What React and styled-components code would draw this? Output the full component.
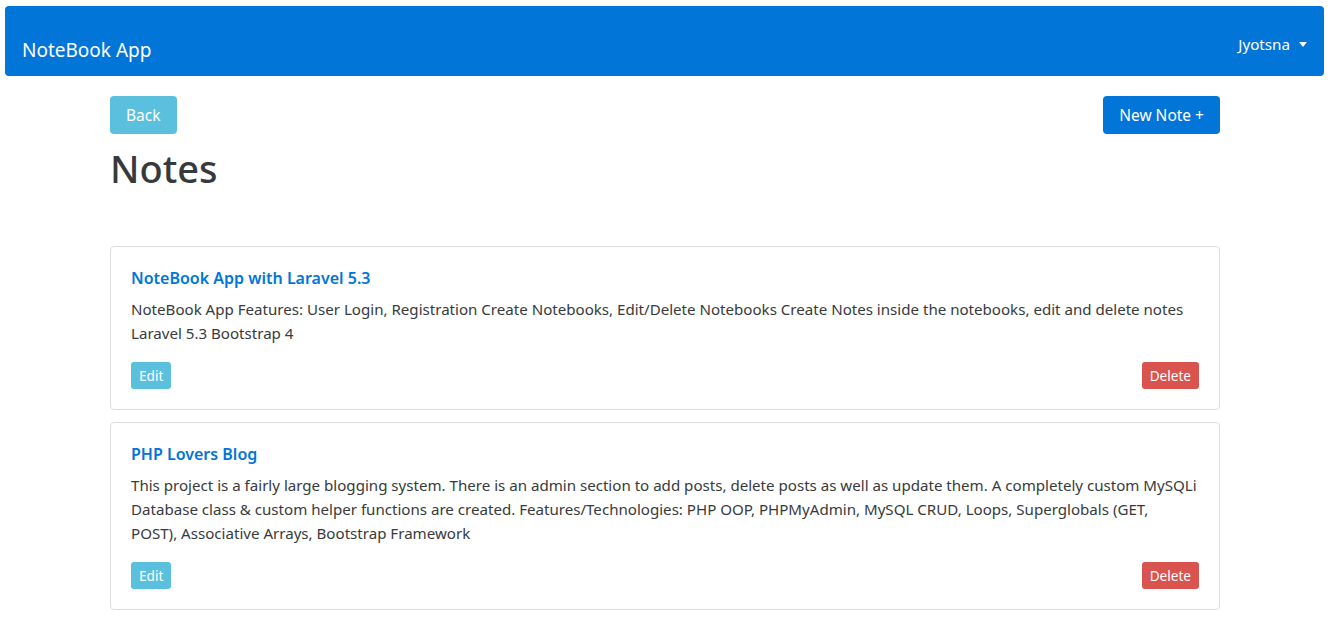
import React from 'react';
import styled, { createGlobalStyle } from 'styled-components';

const Color = {
  PRIMARY: '#0275d8',
  INFO: '#5bc0de',
  DANGER: '#d9534f',
  TEXT: '#373a3c',
  BORDER: '#dfdfdf'
};

const GlobalStyle = createGlobalStyle`
  body {
    margin: 0;
    background: #fff;
    color: ${Color.TEXT};
    font-family: "Noto Sans", "Open Sans", sans-serif;
    font-size: 15.1px;
    line-height: 24px;
  }

  * {
    box-sizing: border-box;
  }
`;

const StyledNavbar = styled.nav`
  display: flex;
  align-items: flex-start;
  justify-content: space-between;
  height: 70px;
  margin: 6px 7px 0 5px;
  padding: 0 17px;

  background-color: ${Color.PRIMARY};
  border-radius: 4px;
`;

const StyledBrand = styled.a`
  margin-top: 29px;

  color: #fff;
  font-size: 19px;
  line-height: 30px;
  text-decoration: none;
`;

const StyledUser = styled.a`
  display: flex;
  align-items: center;
  margin-top: 26px;

  color: #fff;
  font-size: 15.2px;
  line-height: 24px;
  text-decoration: none;

  &::after {
    content: '';
    margin-left: 9px;
    border-top: 5px solid #fff;
    border-left: 4.5px solid transparent;
    border-right: 4.5px solid transparent;
  }
`;

const StyledContainer = styled.main`
  width: 1111px;
  margin: 20px auto 0;
  padding-right: 1px;
`;

const StyledTopRow = styled.div`
  display: flex;
  justify-content: space-between;
`;

const StyledButton = styled.a`
  display: inline-block;
  padding: ${({ small }) => (small ? '3px 8px' : '7px 16px')};

  color: #fff;
  font-size: ${({ small }) => (small ? '13.6px' : '15.5px')};
  line-height: ${({ small }) => (small ? '21px' : '24px')};
  text-decoration: none;

  background-color: ${({ color }) => color};
  border-radius: ${({ small }) => (small ? '3px' : '4px')};
`;

const StyledHeading = styled.h1`
  margin: 12px 0 56px;

  font-size: 38px;
  font-weight: 500;
  line-height: 44px;
`;

const StyledCard = styled.article`
  margin-bottom: 12px;
  padding: 20px;

  border: 1px solid ${Color.BORDER};
  border-radius: 4px;
`;

const StyledCardTitle = styled.a`
  display: block;
  margin-bottom: 8px;

  color: ${Color.PRIMARY};
  font-size: 16px;
  font-weight: 600;
  line-height: 22px;
  text-decoration: none;
`;

const StyledCardText = styled.p`
  margin: 0 0 17px;
  white-space: nowrap;
`;

const StyledCardActions = styled.div`
  display: flex;
  align-items: center;
  justify-content: space-between;
`;

const notes = [
  {
    title: 'NoteBook App with Laravel 5.3',
    lines: [
      'NoteBook App Features: User Login, Registration Create Notebooks, Edit/Delete Notebooks Create Notes inside the notebooks, edit and delete notes',
      'Laravel 5.3 Bootstrap 4'
    ]
  },
  {
    title: 'PHP Lovers Blog',
    lines: [
      'This project is a fairly large blogging system. There is an admin section to add posts, delete posts as well as update them. A completely custom MySQLi',
      'Database class & custom helper functions are created. Features/Technologies: PHP OOP, PHPMyAdmin, MySQL CRUD, Loops, Superglobals (GET,',
      'POST), Associative Arrays, Bootstrap Framework'
    ]
  }
];

function NoteCard({ title, lines }) {
  return (
    <StyledCard>
      <StyledCardTitle href='#'>{title}</StyledCardTitle>
      <StyledCardText>
        {lines.map((line, i) => (
          <React.Fragment key={i}>
            {i > 0 && <br />}
            {line}
          </React.Fragment>
        ))}
      </StyledCardText>
      <StyledCardActions>
        <StyledButton small color={Color.INFO} href='#'>Edit</StyledButton>
        <StyledButton small color={Color.DANGER} href='#'>Delete</StyledButton>
      </StyledCardActions>
    </StyledCard>
  );
}

export default function App() {
  return (
    <>
      <GlobalStyle />
      <StyledNavbar>
        <StyledBrand href='#'>NoteBook App</StyledBrand>
        <StyledUser href='#'>Jyotsna</StyledUser>
      </StyledNavbar>
      <StyledContainer>
        <StyledTopRow>
          <StyledButton color={Color.INFO} href='#'>Back</StyledButton>
          <StyledButton color={Color.PRIMARY} href='#'>New Note +</StyledButton>
        </StyledTopRow>
        <StyledHeading>Notes</StyledHeading>
        {notes.map((note) => (
          <NoteCard key={note.title} {...note} />
        ))}
      </StyledContainer>
    </>
  );
}
